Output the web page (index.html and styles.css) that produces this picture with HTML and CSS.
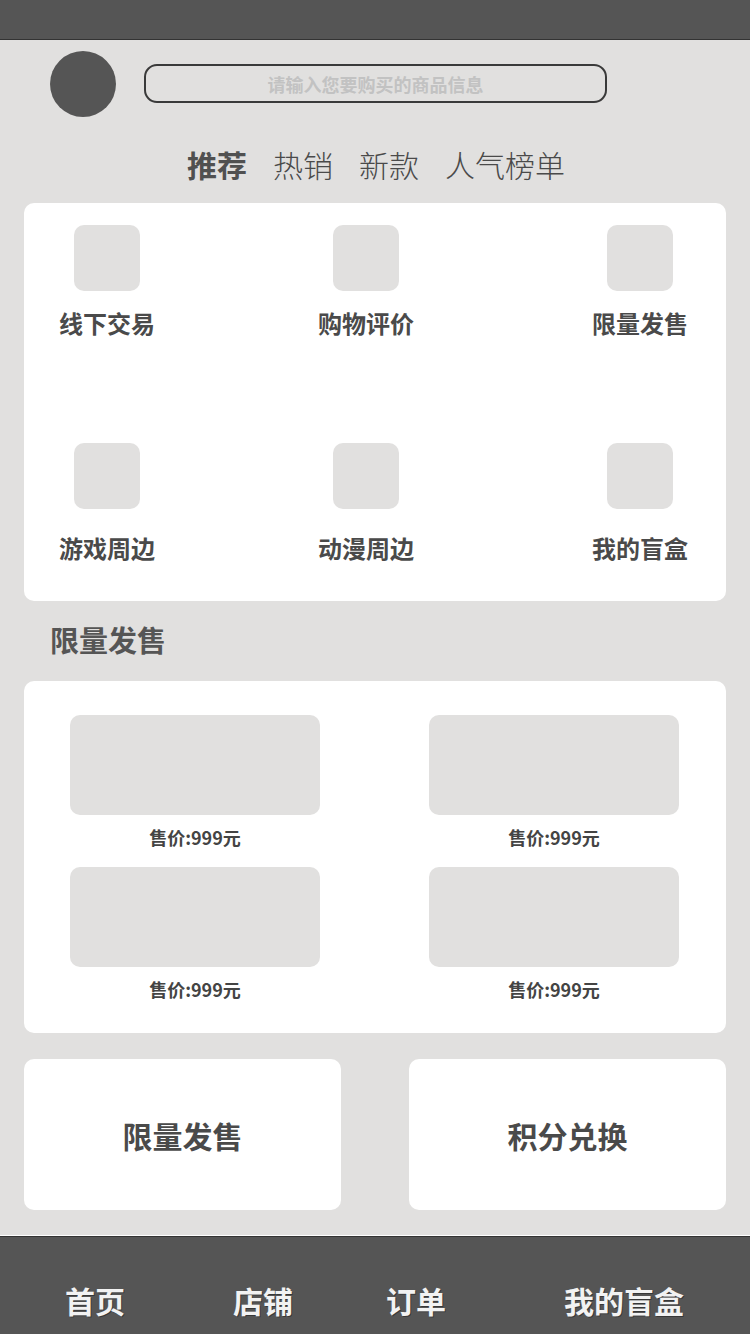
FILE: index.html
```html
<!DOCTYPE html>
<html lang="zh-CN">
<head>
<meta charset="utf-8">
<title>首页</title>
<link rel="stylesheet" href="styles.css">
</head>
<body>
<div class="status"></div>
<header class="header">
  <div class="avatar"></div>
  <div class="search">请输入您要购买的商品信息</div>
</header>
<nav class="tabs">
  <span class="tab active">推荐</span>
  <span class="tab">热销</span>
  <span class="tab">新款</span>
  <span class="tab">人气榜单</span>
</nav>
<section class="card cats">
  <div class="cat"><div class="cat-icon"></div><div class="cat-label">线下交易</div></div>
  <div class="cat"><div class="cat-icon"></div><div class="cat-label">购物评价</div></div>
  <div class="cat"><div class="cat-icon"></div><div class="cat-label">限量发售</div></div>
  <div class="cat row2"><div class="cat-icon"></div><div class="cat-label">游戏周边</div></div>
  <div class="cat row2"><div class="cat-icon"></div><div class="cat-label">动漫周边</div></div>
  <div class="cat row2"><div class="cat-icon"></div><div class="cat-label">我的盲盒</div></div>
</section>
<h2 class="section-title">限量发售</h2>
<section class="card goods">
  <div class="good"><div class="good-img"></div><div class="price">售价:999元</div></div>
  <div class="good"><div class="good-img"></div><div class="price">售价:999元</div></div>
  <div class="good"><div class="good-img"></div><div class="price">售价:999元</div></div>
  <div class="good"><div class="good-img"></div><div class="price">售价:999元</div></div>
</section>
<section class="tiles">
  <div class="tile">限量发售</div>
  <div class="tile">积分兑换</div>
</section>
<footer class="tabbar">
  <span class="tb tb1">首页</span>
  <span class="tb tb2">店铺</span>
  <span class="tb tb3">订单</span>
  <span class="tb tb4">我的盲盒</span>
</footer>
</body>
</html>
```
FILE: styles.css
```css
* { box-sizing: border-box; }
html, body { margin: 0; padding: 0; }
body {
  width: 750px;
  height: 1334px;
  overflow: hidden;
  background: #e1e0df;
  font-family: "Noto Sans CJK SC", "Noto Sans", sans-serif;
  color: #555;
}
.status {
  height: 40px;
  background: #555;
  border-bottom: 1px solid #333;
}
.header {
  display: flex;
  align-items: flex-start;
  padding-left: 50px;
  margin-top: 11px;
}
.avatar {
  width: 66px;
  height: 66px;
  border-radius: 50%;
  background: #555;
  flex: none;
}
.search {
  margin-left: 28px;
  margin-top: 13px;
  width: 463px;
  height: 39px;
  border: 2px solid #3a3a3a;
  border-radius: 13px;
  display: flex;
  align-items: center;
  justify-content: center;
  font-size: 18px;
  font-weight: 700;
  color: #c2c2c2;
  line-height: 1;
}
.tabs {
  display: flex;
  justify-content: center;
  gap: 26px;
  margin-top: 32px;
  line-height: 30px;
  height: 30px;
  font-size: 30px;
  padding-left: 2px;
}
.tab { font-weight: 300; color: #4a4a4a; }
.tab.active { font-weight: 700; color: #505050; }
.card {
  background: #fff;
  border-radius: 10px;
  margin: 0 24px;
}
.cats {
  margin-top: 24px;
  padding: 22px 0 41px;
  display: grid;
  grid-template-columns: 166px 364px 172px;
  row-gap: 108px;
}
.cat {
  display: flex;
  flex-direction: column;
  align-items: center;
}
.cat:nth-child(3n+2) { padding-right: 12px; }
.cat-icon {
  width: 66px;
  height: 66px;
  border-radius: 10px;
  background: #e1e0df;
}
.cat-label {
  margin-top: 20px;
  font-size: 24px;
  line-height: 24px;
  font-weight: 700;
  color: #4a4a4a;
}
.row2 .cat-label { margin-top: 27px; }
.section-title {
  margin: 24px 0 0 50px;
  font-size: 29px;
  line-height: 29px;
  height: 29px;
  font-weight: 700;
  color: #555;
}
.goods {
  margin-top: 27px;
  padding: 34px 47px 35px 46px;
  display: grid;
  grid-template-columns: 250px 250px;
  column-gap: 109px;
  row-gap: 21px;
}
.good {
  display: flex;
  flex-direction: column;
  align-items: center;
}
.good-img {
  width: 250px;
  height: 100px;
  border-radius: 10px;
  background: #e1e0df;
}
.price {
  margin-top: 13px;
  font-size: 18px;
  line-height: 18px;
  font-weight: 700;
  color: #444;
}
.tiles {
  display: flex;
  gap: 68px;
  margin: 26px 24px 0;
}
.tile {
  flex: 1;
  height: 151px;
  background: #fff;
  border-radius: 10px;
  display: flex;
  align-items: center;
  justify-content: center;
  font-size: 30px;
  font-weight: 700;
  color: #4a4a4a;
}
.tabbar {
  margin-top: 25px;
  height: 99px;
  background: #555;
  border-top: 1px solid #fff;
  box-shadow: inset 0 1px 0 #333;
  display: flex;
  align-items: flex-start;
  padding: 49px 0 0 65px;
}
.tb {
  font-size: 30px;
  line-height: 30px;
  font-weight: 700;
  color: #f2f2f2;
  text-shadow: 1px 1px 0 rgba(0,0,0,0.35);
}
.tb2 { margin-left: 108px; }
.tb3 { margin-left: 93px; }
.tb4 { margin-left: 118px; }
```
